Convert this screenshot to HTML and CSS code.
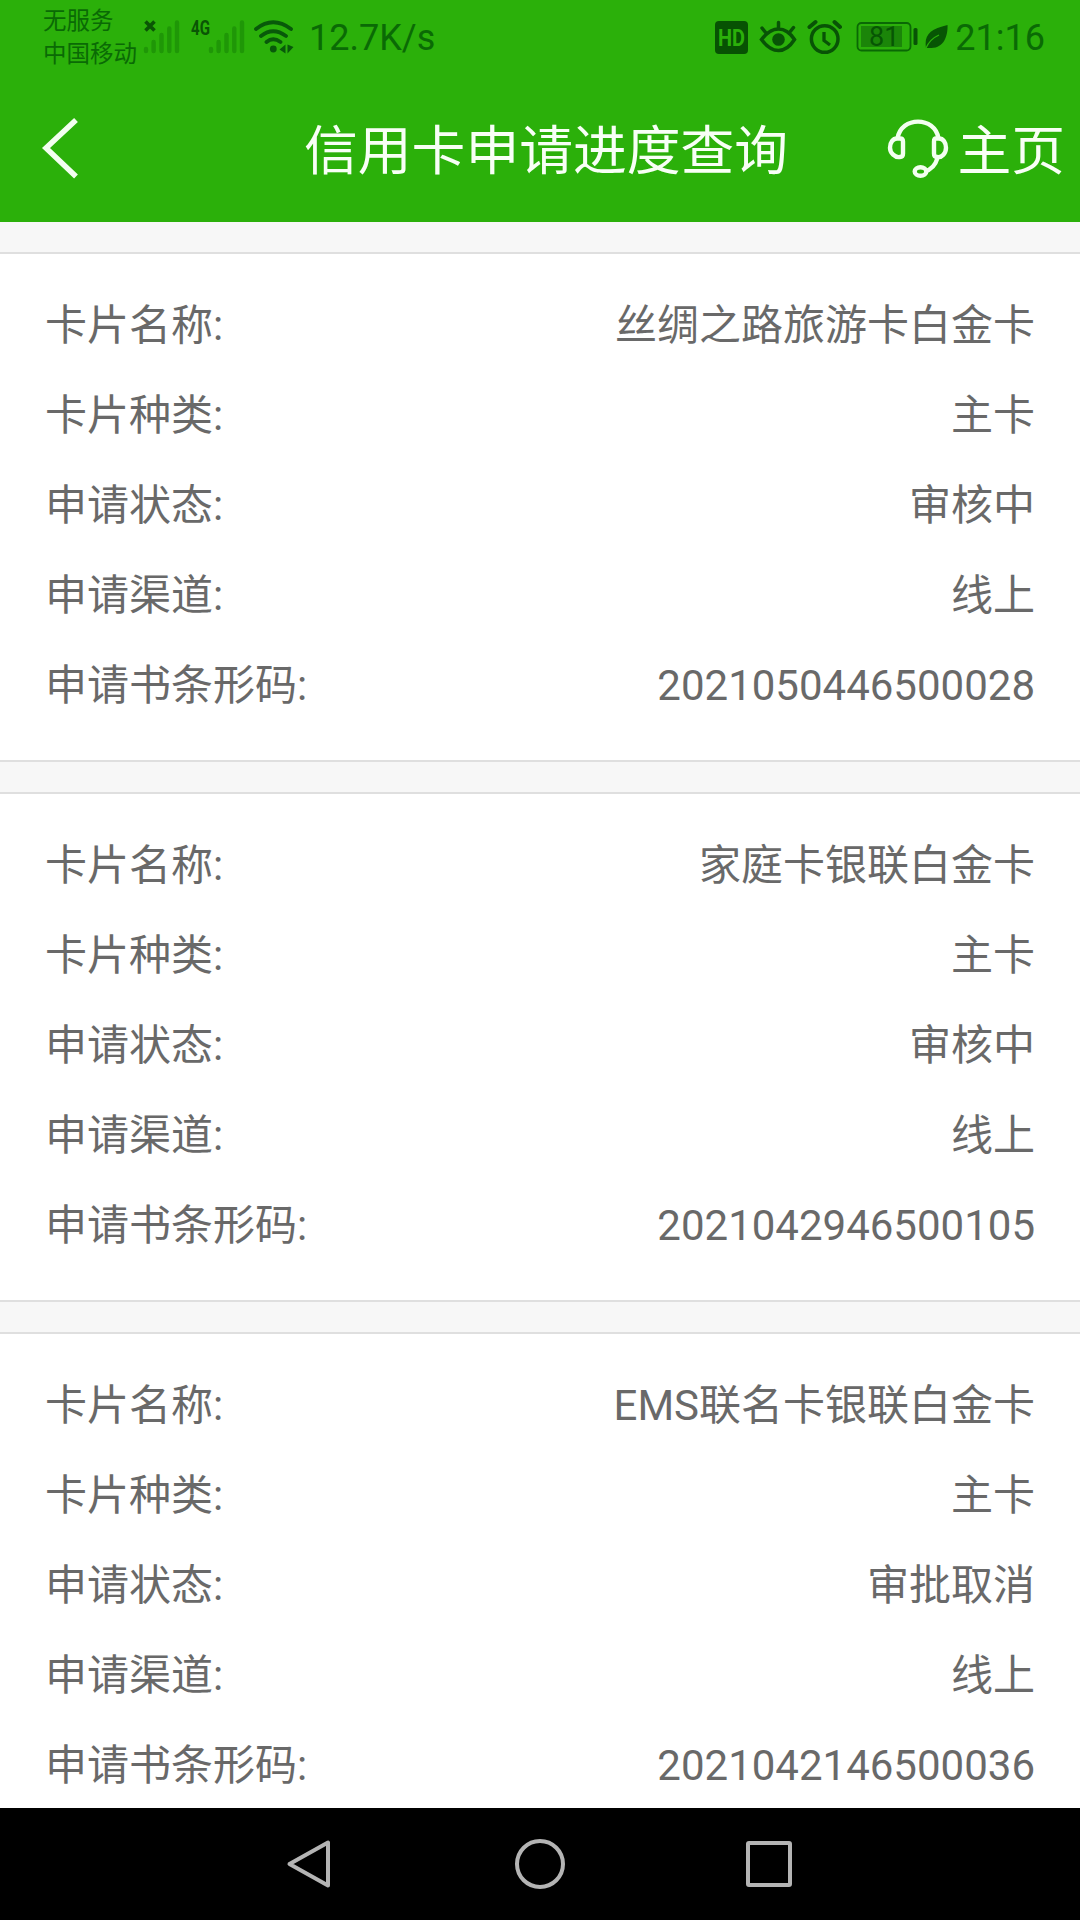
FILE: index.html
```html
<!DOCTYPE html>
<html lang="zh-CN">
<head>
<meta charset="utf-8">
<title>信用卡申请进度查询</title>
<link rel="stylesheet" href="styles.css">
</head>
<body>
<div class="screen">
  <div class="status">
    <div class="status-left">
      <div class="carriers"><span>无服务</span><span>中国移动</span></div>
      <svg class="signals" width="104" height="40" viewBox="142 16 104 40">
        <path d="M145.5 20.500l9 9M154.500 20.500l-9 9" stroke="#0a5505" stroke-width="3.600"/>
        <g stroke="#1f9707" stroke-width="4.400" stroke-linecap="round">
          <path d="M146 48v2M153.600 41v9M161.500 34v16M169.300 27.500v22.500M177 21.500v28.500"/>
          <path d="M211 48v2M218.600 41v9M226.500 34v16M234.300 27.500v22.500M242 21.500v28.500"/>
        </g>
        <text class="network" x="191" y="33.500" textLength="19" lengthAdjust="spacingAndGlyphs">4G</text>
      </svg>
      <svg class="wifi" width="42" height="38" viewBox="252 17 42 38" fill="none" stroke="#08590a" stroke-width="3.800" stroke-linecap="round">
        <path d="M256 28q17-13.500 35 0M261 35q12-9.500 25 0M266.500 41q6.500-5.500 14 0"/>
        <circle cx="273.300" cy="48" r="3.400" fill="#08590a" stroke="none"/>
        <path d="M279.500 48.500l6-5v9zM287.500 43.500v9l6-6.500z" fill="#08590a" stroke="none"/>
      </svg>
      <span class="speed">12.7K/s</span>
    </div>
    <div class="status-right">
      <svg width="33" height="33" viewBox="0 0 33 33">
        <rect width="33" height="33" rx="4" fill="#075203"/>
        <text class="hd" x="3" y="24.500" textLength="27" lengthAdjust="spacingAndGlyphs">HD</text>
      </svg>
      <svg class="eye" width="38" height="34" viewBox="759 20 38 34" fill="none" stroke="#085306" stroke-width="3.500" stroke-linecap="round">
        <path d="M761.500 39.500q8-10.500 17-10.500t16 10.500q-7 11-16 11t-17-11zM778.500 28v-5.500M766 33l-4-5M789.500 32.500l4-5"/>
        <circle cx="778.500" cy="39.500" r="6.300" fill="#085306" stroke="none"/>
      </svg>
      <svg class="alarm" width="36" height="36" viewBox="807 18 36 36" fill="none" stroke="#085306" stroke-width="3.500">
        <circle cx="824.700" cy="38" r="13.300"/>
        <path d="M824 31v8.500l6 4.500" stroke-width="3.300"/>
        <path d="M809.500 26l6-5M834.500 21l5.500 5" stroke-width="4" stroke-linecap="round"/>
      </svg>
      <svg class="battery" width="62" height="30" viewBox="856 22 62 30">
        <rect x="857.500" y="23" width="53" height="27.500" rx="4" fill="none" stroke="#0a6805" stroke-width="1.800"/>
        <rect x="861" y="26" width="41" height="21" fill="#1b8509"/>
        <rect x="913.500" y="28" width="4" height="17" rx="1.500" fill="#085306"/>
        <text class="level" x="869" y="46">81</text>
      </svg>
      <svg class="leaf" width="23" height="24" viewBox="0 0 23 24">
        <path d="M22.500 0C23 9 20 24 5 23L1 23C-1 10 5 4 22.500 0z" fill="#075504"/>
        <path d="M1 23Q5 14 14 10" fill="none" stroke="#2bb00a" stroke-width="1.300"/>
      </svg>
      <span class="clock">21:16</span>
    </div>
  </div>
  <header class="nav">
    <svg class="back" width="42" height="66" viewBox="39 115 42 66"><path d="M76 120L46 148l30 28.500" fill="none" stroke="#f3fff0" stroke-width="5.500"/></svg>
    <h1>信用卡申请进度查询</h1>
    <div class="home">
      <svg width="62" height="62" viewBox="887 117 62 62" fill="none" stroke="#f3fff0" stroke-width="4.400">
        <path d="M897.500 137.500C901 115 935 115 938.500 137.500M937.500 157c-2 7-7 12-13 13.500"/>
        <path d="M897 137.500h3q3 0 3 3v12q0 3.500-3 3.500c-5 1-10-4-10-9.300s3-9.200 7-9.200zM939 137.500h-3q-2 0-2 3v12q0 3.500 3 3.500c5 1 9-4 9-9.300s-3-9.200-7-9.200z"/>
        <ellipse cx="920.500" cy="170.500" rx="5.800" ry="4.300"/>
      </svg>
      <span>主页</span>
    </div>
  </header>
  <main class="list">
    <section class="card">
      <div class="row"><span>卡片名称:</span><span>丝绸之路旅游卡白金卡</span></div>
      <div class="row"><span>卡片种类:</span><span>主卡</span></div>
      <div class="row"><span>申请状态:</span><span>审核中</span></div>
      <div class="row"><span>申请渠道:</span><span>线上</span></div>
      <div class="row"><span>申请书条形码:</span><span>2021050446500028</span></div>
    </section>
    <section class="card">
      <div class="row"><span>卡片名称:</span><span>家庭卡银联白金卡</span></div>
      <div class="row"><span>卡片种类:</span><span>主卡</span></div>
      <div class="row"><span>申请状态:</span><span>审核中</span></div>
      <div class="row"><span>申请渠道:</span><span>线上</span></div>
      <div class="row"><span>申请书条形码:</span><span>2021042946500105</span></div>
    </section>
    <section class="card">
      <div class="row"><span>卡片名称:</span><span>EMS联名卡银联白金卡</span></div>
      <div class="row"><span>卡片种类:</span><span>主卡</span></div>
      <div class="row"><span>申请状态:</span><span>审批取消</span></div>
      <div class="row"><span>申请渠道:</span><span>线上</span></div>
      <div class="row"><span>申请书条形码:</span><span>2021042146500036</span></div>
    </section>
  </main>
  <footer class="keys">
    <svg width="52" height="52" viewBox="0 0 52 52"><path d="M43 4.500v43L4.500 26z"/></svg>
    <svg width="52" height="52" viewBox="0 0 52 52"><circle cx="26" cy="26" r="23"/></svg>
    <svg width="52" height="52" viewBox="0 0 52 52"><rect x="5" y="5" width="42" height="42" rx="1"/></svg>
  </footer>
</div>
</body>
</html>
```
FILE: styles.css
```css
* { box-sizing: border-box; }
body { margin: 0; font-family: Roboto, "Noto Sans CJK SC", sans-serif; }
svg { display: block; flex: none; }
.screen {
  width: 1080px;
  height: 1920px;
  display: flex;
  flex-direction: column;
  overflow: hidden;
  background: #f7f7f7;
}
.status {
  flex: none;
  height: 74px;
  padding: 0 35px 0 43px;
  display: flex;
  justify-content: space-between;
  background: #2bb00a;
  color: #0a6a05;
}
.status-left, .status-right { display: flex; align-items: center; }
.carriers {
  width: 99px;
  padding-top: 2px;
  display: flex;
  flex-direction: column;
  font-size: 23.5px;
  line-height: 33px;
  white-space: nowrap;
}
.wifi { margin-left: 6px; }
.speed, .clock { padding-top: 2px; font-size: 36px; line-height: 40px; white-space: nowrap; }
.speed { margin-left: 15px; }
.network { font-size: 20px; font-weight: 700; fill: #0a5505; }
.hd { font-size: 23px; font-weight: 700; fill: #2bb00a; }
.level { font-size: 27px; fill: #075504; }
.eye { margin-left: 11px; }
.alarm { margin-left: 10px; }
.battery { margin-left: 13px; }
.leaf { margin: 0 7px; }
.nav {
  flex: none;
  height: 148px;
  padding: 0 15px 0 39px;
  display: grid;
  grid-template-columns: 265px 1fr auto;
  align-items: center;
  background: #2bb00a;
  color: #f8fff6;
  font-size: 53.8px;
  line-height: 80px;
}
h1 { margin: 0; padding-top: 7px; font-size: inherit; font-weight: 400; white-space: nowrap; }
.home { display: flex; align-items: center; gap: 8px; }
.home span { padding-top: 7px; }
.home svg { margin-top: 1px; }
.list {
  flex: 1;
  min-height: 0;
  padding-top: 30px;
  display: flex;
  flex-direction: column;
  gap: 30px;
  overflow: hidden;
}
.card {
  flex: none;
  height: 510px;
  padding: 27px 45px 0;
  border: solid #dfdfdf;
  border-width: 2px 0;
  background: #fff;
}
.row {
  height: 90px;
  display: flex;
  justify-content: space-between;
  align-items: center;
  font-size: 42px;
  line-height: 60px;
  color: #696969;
  white-space: nowrap;
}
.keys {
  flex: none;
  height: 112px;
  padding: 0 285px;
  display: flex;
  justify-content: space-between;
  align-items: center;
  background: #000;
}
.keys svg { fill: none; stroke: #b4b4b4; stroke-width: 4px; stroke-linejoin: round; }
```
